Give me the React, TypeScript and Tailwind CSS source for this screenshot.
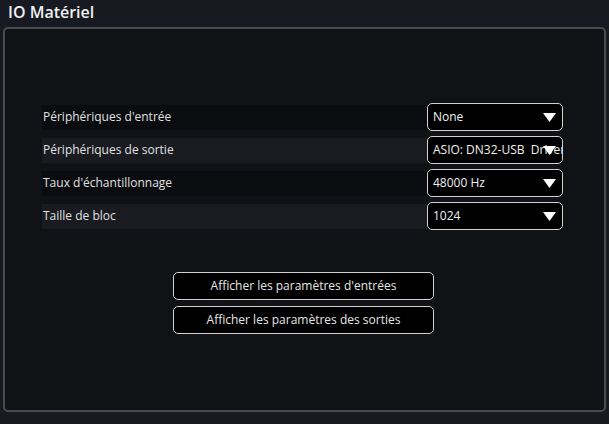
import React from "react";

const rows = [
  { label: "Périphériques d'entrée", value: "None", dark: true },
  { label: "Périphériques de sortie", value: "ASIO: DN32-USB  Driver", dark: false },
  { label: "Taux d'échantillonnage", value: "48000 Hz", dark: true },
  { label: "Taille de bloc", value: "1024", dark: false },
];

function Arrow() {
  return (
    <svg width="13" height="9" viewBox="0 0 13 9" className="shrink-0">
      <polygon points="0,0 13,0 6.5,9" fill="#ffffff" />
    </svg>
  );
}

export default function App() {
  return (
    <div
      className="w-[609px] h-[424px] bg-[#171a21] text-[#e6e6e6] overflow-hidden"
      style={{ fontFamily: '"Open Sans", "Noto Sans", sans-serif' }}
    >
      <div className="h-[27px] pl-[8px] pt-[1px] text-[16px] font-semibold leading-[22px] text-[#f0f0f0]">
        IO Matériel
      </div>
      <div className="ml-[3px] w-[603px] h-[385px] rounded-[5px] border-2 border-[#4a4b4e] bg-[#111216] pl-[37px] pr-[41px] pt-[74px]">
        <div className="flex flex-col gap-[5px]">
          {rows.map((r) => (
            <div key={r.label} className="flex items-center h-[28px]">
              <div
                className={`flex-1 h-[25px] flex items-center pl-[1px] text-[12px] text-[#e0e0e0] ${
                  r.dark ? "bg-[#0b0c0f]" : "bg-[#191b21]"
                }`}
              >
                {r.label}
              </div>
              <div className="relative w-[136px] h-[28px] rounded-[5px] border border-[#d0d0d0] bg-black flex items-center pl-[5px] overflow-hidden">
                <span className="text-[12px] whitespace-pre text-[#f0f0f0]">{r.value}</span>
                <div className="absolute right-[6px] top-[9px]">
                  <Arrow />
                </div>
              </div>
            </div>
          ))}
        </div>
        <div className="flex flex-col items-center gap-[6px] mt-[42px] pl-[2px]">
          <button className="w-[261px] h-[28px] rounded-[5px] border border-[#d0d0d0] bg-black text-[12px] text-[#e6e6e6]">
            Afficher les paramètres d'entrées
          </button>
          <button className="w-[261px] h-[28px] rounded-[5px] border border-[#d0d0d0] bg-black text-[12px] text-[#e6e6e6]">
            Afficher les paramètres des sorties
          </button>
        </div>
      </div>
    </div>
  );
}
